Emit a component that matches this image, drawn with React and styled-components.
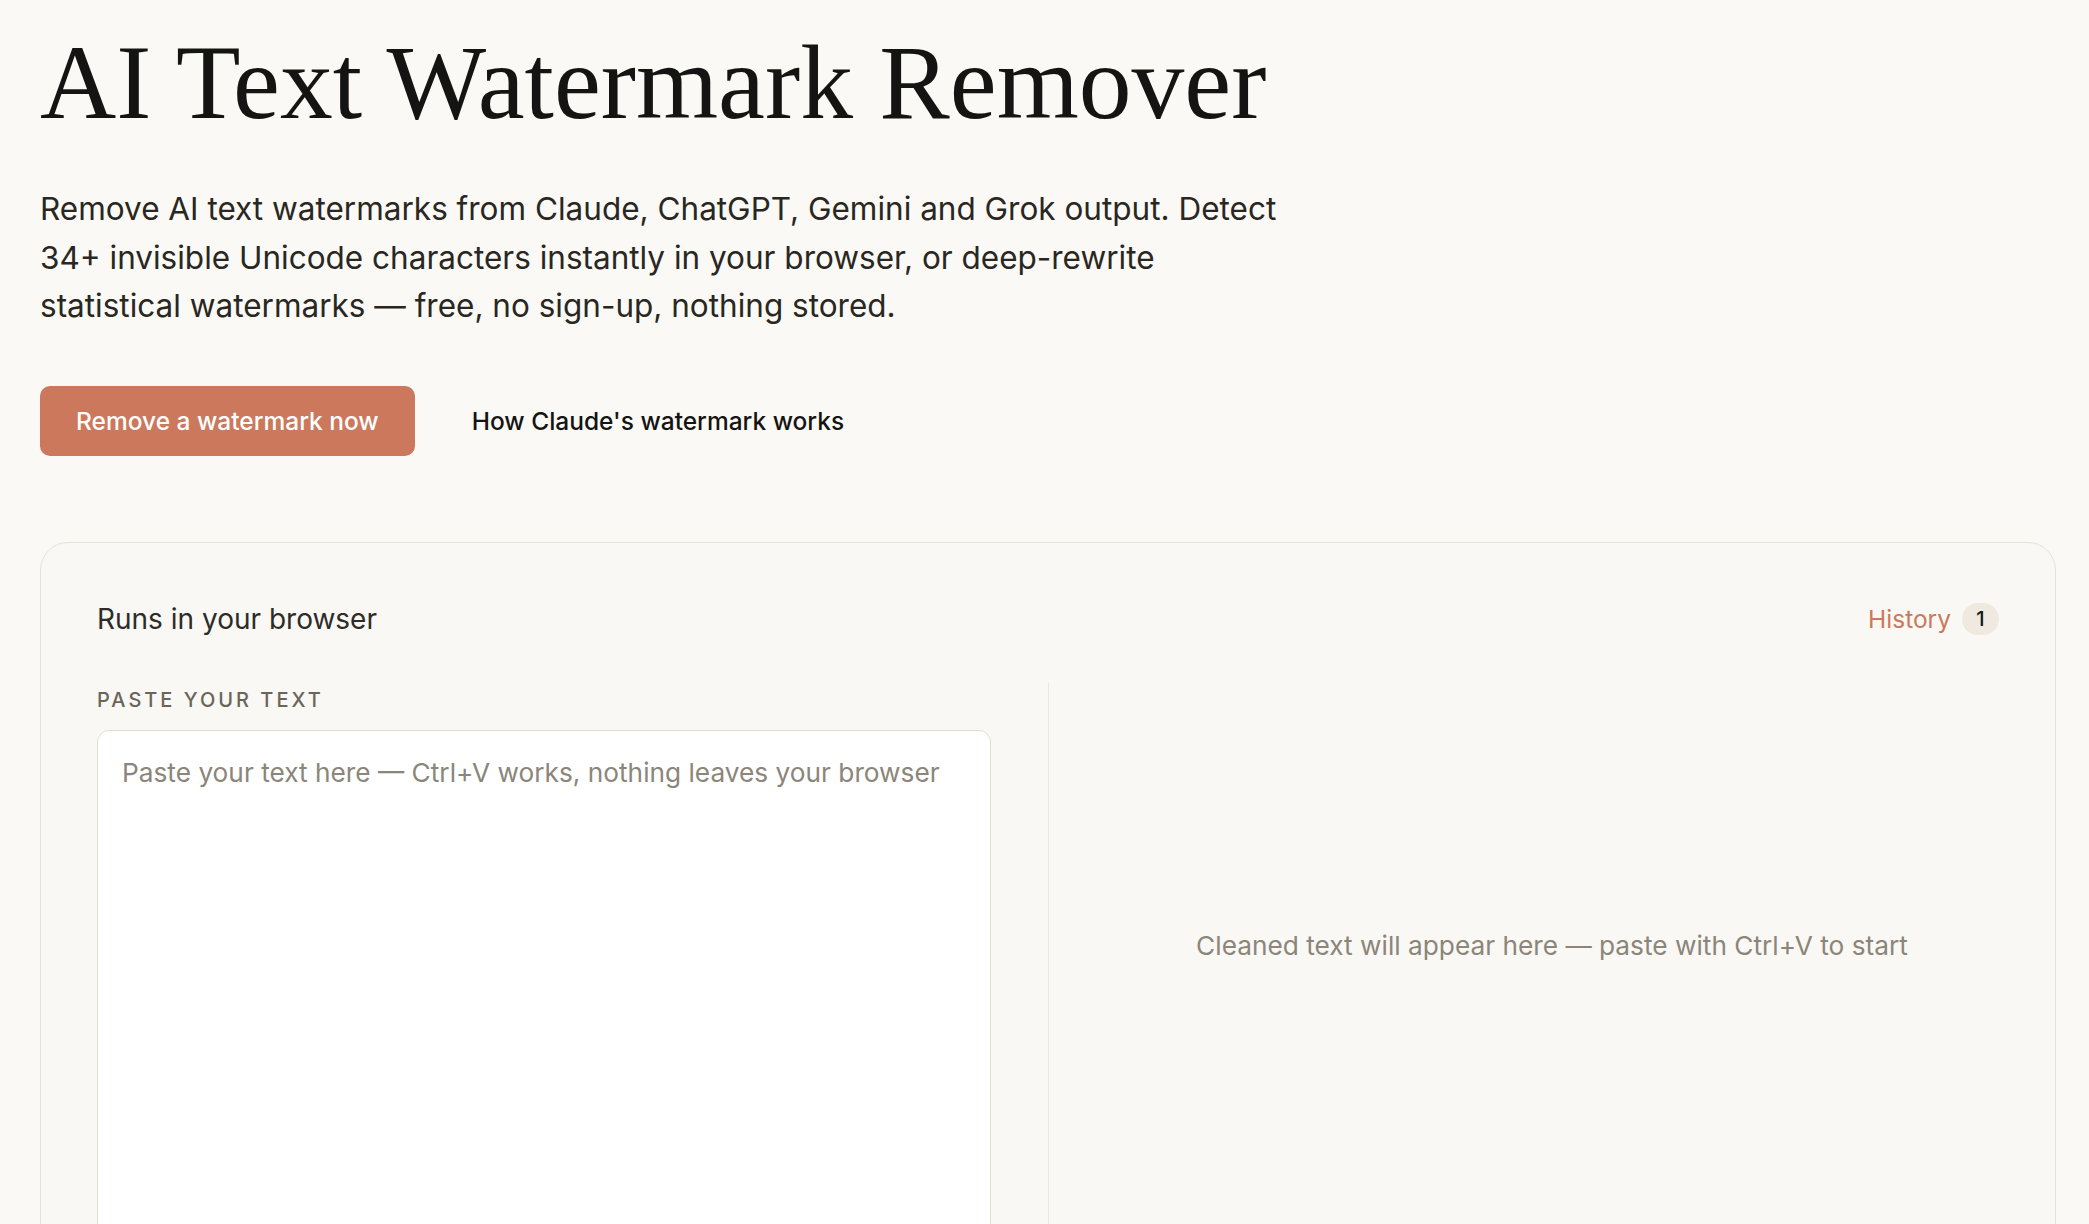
import React from "react"
import styled, { createGlobalStyle } from "styled-components"

const GlobalStyle = createGlobalStyle`
    body {
        margin: 0;
        background: #faf9f5;
        font-family: Inter, "Noto Sans", sans-serif;
        color: #1f1e1b;
    }
`

export default function App() {
    return (
        <>
            <GlobalStyle />
            <Page>
                <Title>AI Text Watermark Remover</Title>
                <Lead>
                    Remove AI text watermarks from Claude, ChatGPT, Gemini and Grok output. Detect
                    34+ invisible Unicode characters instantly in your browser, or deep-rewrite
                    statistical watermarks — free, no sign-up, nothing stored.
                </Lead>
                <Actions>
                    <PrimaryButton>Remove a watermark now</PrimaryButton>
                    <TextLink href="#how">How Claude's watermark works</TextLink>
                </Actions>

                <ToolCard>
                    <CardHeader>
                        <CardTitle>Runs in your browser</CardTitle>
                        <HistoryButton>
                            History
                            <CountBadge>1</CountBadge>
                        </HistoryButton>
                    </CardHeader>
                    <Panes>
                        <InputPane>
                            <FieldLabel htmlFor="source">Paste your text</FieldLabel>
                            <SourceText
                                id="source"
                                placeholder="Paste your text here — Ctrl+V works, nothing leaves your browser"
                            />
                        </InputPane>
                        <OutputPane>
                            <EmptyHint>Cleaned text will appear here — paste with Ctrl+V to start</EmptyHint>
                        </OutputPane>
                    </Panes>
                </ToolCard>
            </Page>
        </>
    )
}

const Page = styled.main`
    padding: 25px 33px 0 40px;
`

const Title = styled.h1`
    margin: 0;
    font-family: "Liberation Serif", "DejaVu Serif", serif;
    font-size: 105.6px;
    font-weight: 400;
    line-height: 1.1;
    color: #141413;
`

const Lead = styled.p`
    margin: 44px 0 0;
    max-width: 1245px;
    font-size: 31.5px;
    line-height: 48.6px;
    color: #29271f;
`

const Actions = styled.div`
    display: flex;
    align-items: center;
    gap: 57px;
    margin-top: 55px;
`

const PrimaryButton = styled.button`
    height: 70px;
    padding: 0 36px;
    border: none;
    border-radius: 10px;
    background: #cc785c;
    color: #fff;
    font-family: inherit;
    font-size: 24.5px;
    font-weight: 500;
    cursor: pointer;
`

const TextLink = styled.a`
    font-size: 24.5px;
    font-weight: 500;
    color: #141413;
    text-decoration: none;
`

const ToolCard = styled.section`
    margin-top: 86px;
    padding: 56px 56px 0;
    border: 1px solid #e6e2da;
    border-radius: 28px;
    background: #f9f8f4;
`

const CardHeader = styled.div`
    display: flex;
    justify-content: space-between;
    align-items: center;
    height: 40px;
`

const CardTitle = styled.h2`
    margin: 0;
    font-size: 28px;
    font-weight: 400;
    color: #2e2c27;
`

const HistoryButton = styled.button`
    display: flex;
    align-items: center;
    gap: 11px;
    padding: 0;
    border: none;
    background: none;
    font-family: inherit;
    font-size: 24.5px;
    color: #cc785c;
    cursor: pointer;
`

const CountBadge = styled.span`
    display: inline-flex;
    align-items: center;
    justify-content: center;
    min-width: 37px;
    height: 32px;
    border-radius: 16px;
    background: #efe9df;
    color: #141413;
    font-size: 20px;
    font-weight: 500;
`

const Panes = styled.div`
    display: grid;
    grid-template-columns: 1fr 1fr;
    margin-top: 44px;
`

const InputPane = styled.div`
    display: flex;
    flex-direction: column;
    padding-right: 57px;
`

const FieldLabel = styled.label`
    margin-bottom: 13px;
    font-size: 20px;
    font-weight: 500;
    line-height: 34px;
    letter-spacing: 0.15em;
    text-transform: uppercase;
    color: #6b6459;
`

const SourceText = styled.textarea`
    height: 560px;
    padding: 22px 24px;
    border: 1px solid #e2ded6;
    border-radius: 12px;
    background: #fff;
    font-family: inherit;
    font-size: 26.25px;
    line-height: 1.5;
    color: #1f1e1b;
    resize: none;
    outline: none;

    &::placeholder {
        color: #8b857a;
    }
`

const OutputPane = styled.div`
    display: flex;
    align-items: center;
    justify-content: center;
    padding: 0 0 127px 56px;
    border-left: 1px solid #ebe7e0;
`

const EmptyHint = styled.p`
    margin: 0;
    font-size: 26.25px;
    color: #8b857a;
`
